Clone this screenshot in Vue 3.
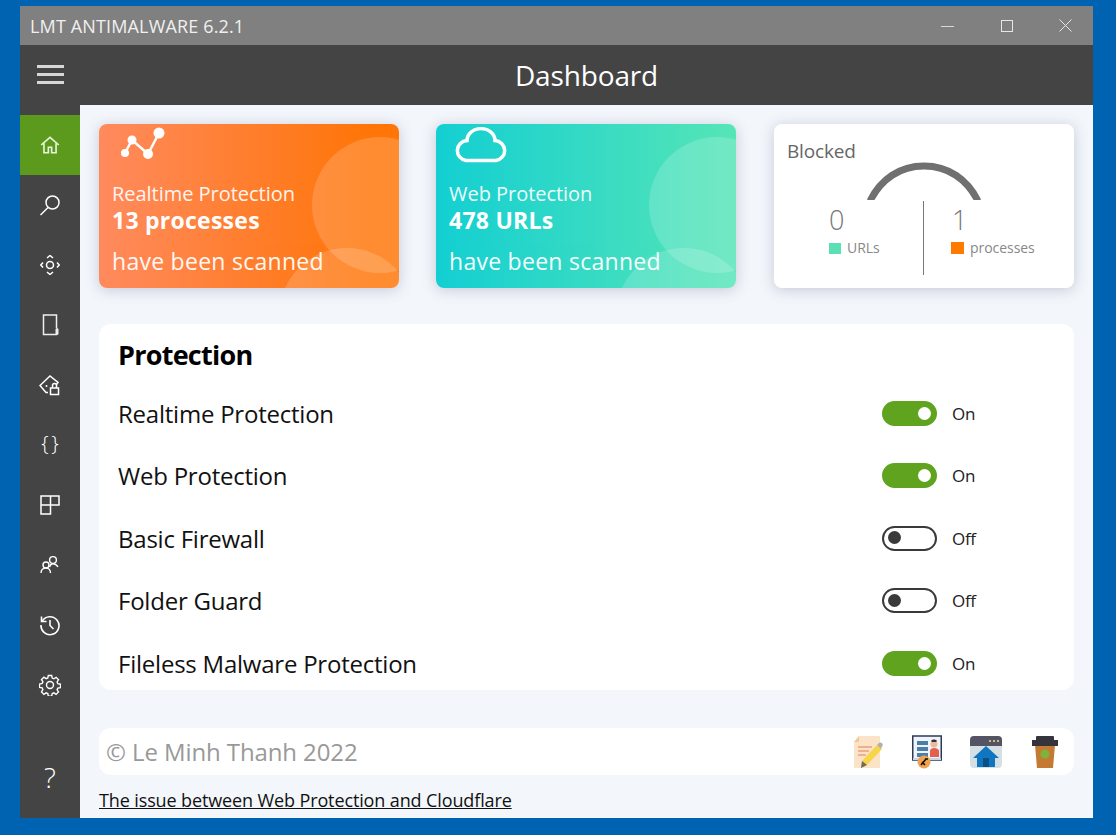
<template>
  <div class="desktop">
    <div class="window">
      <div class="titlebar">
        <span class="title">LMT ANTIMALWARE 6.2.1</span>
        <div class="controls">
          <svg width="13" height="13" viewBox="0 0 13 13"><path d="M0 7.500h13" stroke="#d8d8d8" fill="none"/></svg>
          <svg width="13" height="13" viewBox="0 0 13 13"><rect x="1.500" y="1.500" width="11" height="11" stroke="#e6e6e6" fill="none"/></svg>
          <svg width="13" height="13" viewBox="0 0 13 13"><path d="M.5.5l12 12M12.500.5l-12 12" stroke="#e6e6e6" fill="none"/></svg>
        </div>
      </div>
      <div class="main">
        <aside class="sidebar">
          <div class="burger"><i></i><i></i><i></i></div>
          <div class="nav">
            <div class="nav-item active">
              <svg viewBox="0 0 20 20" width="22" height="22" fill="none" stroke="#e8f5d8" stroke-width="1.500"><path d="M2 10L10 3l8 7M4.500 8.500V17h4v-5h3v5h4V8.500"/></svg>
            </div>
            <div class="nav-item">
              <svg viewBox="0 0 22 22" width="22" height="22" fill="none" stroke="#fff" stroke-width="1.500"><circle cx="13.500" cy="8.500" r="6.500"/><path d="M9 13.500L1.500 21"/></svg>
            </div>
            <div class="nav-item">
              <svg viewBox="0 0 20 20" width="20" height="20" fill="none" stroke="#fff" stroke-width="1.500"><circle cx="10" cy="10" r="3.500"/><path d="M7 3l3-2.500L13 3M7 17l3 2.500 3-2.500M3 7.500L.8 10 3 12.500M17 7.500l2.200 2.500-2.200 2.500"/></svg>
            </div>
            <div class="nav-item">
              <svg viewBox="0 0 18 22" width="18" height="22" fill="none" stroke="#eee" stroke-width="1.500"><path d="M15.500 14V1H2.500v19.500H16"/><path d="M16 15.500v4" stroke-width="3" stroke-linecap="round"/></svg>
            </div>
            <div class="nav-item">
              <svg viewBox="0 0 22 22" width="22" height="22" fill="none" stroke="#fff" stroke-width="1.500"><path d="M9 18.500H7L1 11.500 11 2l8 6.500-1.500 2"/><rect x="11.500" y="14" width="8" height="6.500"/><path d="M13.500 14v-2.500a2 2 0 0 1 4 0V14"/><circle cx="7.500" cy="12" r="1" fill="#fff" stroke="none"/></svg>
            </div>
            <div class="nav-item braces">{ }</div>
            <div class="nav-item">
              <svg viewBox="0 0 20 20" width="20" height="20" fill="none" stroke="#fff" stroke-width="1.500"><path d="M1 1h18v9h-8.500v9H1zM1 10h9.500M10.500 1v9"/></svg>
            </div>
            <div class="nav-item">
              <svg viewBox="0 0 20 20" width="20" height="20" fill="none" stroke="#fff" stroke-width="1.400"><circle cx="13" cy="5" r="3.400"/><path d="M9.500 12c.6-2 2-3.200 3.500-3.200 2.200 0 4 1.600 5 3.200"/><circle cx="6" cy="10" r="3"/><path d="M1 18c0-3 2.200-5 5-5s4.500 2 4.500 5"/></svg>
            </div>
            <div class="nav-item">
              <svg viewBox="0 0 22 22" width="22" height="22" fill="none" stroke="#fff" stroke-width="1.600"><path d="M3.300 7A9 9 0 1 1 2 11"/><path d="M2.500 2.500V7.500H7.500"/><path d="M11 6v5.500l3.500 3.500"/></svg>
            </div>
            <div class="nav-item">
              <svg viewBox="0 0 22 22" width="22" height="22" fill="none" stroke="#fff" stroke-width="1.400"><circle cx="11" cy="11" r="3.500"/><path d="M9.300 1.500h3.400l.5 2.600 1.700.7 2.200-1.500 2.400 2.400L18.100 8l.7 1.700 2.700.5v3.400l-2.700.5-.7 1.700 1.400 2.200-2.400 2.400-2.200-1.500-1.700.7-.5 2.600h-3.400l-.5-2.600-1.700-.7-2.200 1.500-2.400-2.400L3.900 15.600l-.7-1.700-2.700-.5V10l2.700-.5.700-1.700-1.400-2.200 2.400-2.400 2.200 1.500 1.700-.7z"/></svg>
            </div>
          </div>
          <div class="help">?</div>
        </aside>
        <div class="body">
          <header class="topbar">Dashboard</header>
          <div class="content">
            <div class="cards">
              <div class="card orange">
                <div class="blob big"></div><div class="blob small"></div>
                <svg class="card-icon graph" width="48" height="38" viewBox="0 0 48 38" fill="#fff" stroke="none"><path d="M6 28L13 15 29 29 40 8" fill="none" stroke="#fff" stroke-width="2.500"/><circle cx="6" cy="28" r="4"/><circle cx="13" cy="15" r="4.500"/><circle cx="29" cy="29" r="5"/><circle cx="40" cy="8" r="5.500"/></svg>
                <div class="card-l1">Realtime Protection</div>
                <div class="card-l2">13 processes</div>
                <div class="card-l3">have been scanned</div>
              </div>
              <div class="card teal">
                <div class="blob big"></div><div class="blob small"></div>
                <svg class="card-icon cloud" width="54" height="38" viewBox="0 0 54 38" fill="none" stroke="#fff" stroke-width="3.500"><path d="M12 33.500A10 10 0 0 1 13 13.600 14 12 0 0 1 41 13.600 10 10 0 0 1 42 33.500Z"/></svg>
                <div class="card-l1">Web Protection</div>
                <div class="card-l2">478 URLs</div>
                <div class="card-l3">have been scanned</div>
              </div>
              <div class="card white">
                <div class="blocked">Blocked</div>
                <svg class="arc" width="114" height="38" viewBox="0 0 114 38" fill="none"><path d="M3 39C14 17 33 4 57 4s43 13 54 35" stroke="#707070" stroke-width="7"/></svg>
                <div class="stats">
                  <div class="stat left">
                    <div class="num">0</div>
                    <div class="legend"><i class="sq sq-g"></i>URLs</div>
                  </div>
                  <div class="divider"></div>
                  <div class="stat right">
                    <div class="num">1</div>
                    <div class="legend"><i class="sq sq-o"></i>processes</div>
                  </div>
                </div>
              </div>
            </div>
            <section class="protection">
              <h2>Protection</h2>
              <div v-for="row in rows" :key="row.name" class="row">
                <span class="row-name">{{ row.name }}</span>
                <div class="toggle-wrap">
                  <span class="toggle" :class="row.on ? 'on' : 'off'"><i></i></span>
                  <span class="state">{{ row.on ? 'On' : 'Off' }}</span>
                </div>
              </div>
            </section>
            <footer class="foot">
              <span class="copy">© Le Minh Thanh 2022</span>
              <div class="foot-icons">
                <svg width="30" height="34" viewBox="2 0 30 34"><path d="M7 1h21v32H2V7z" fill="#fbe3c8"/><path d="M7 1v6H2z" fill="#f3c79c"/><path d="M6 12h14M6 16h11M6 20h8" stroke="#ee9f7a" stroke-width="1.500"/><path d="M10 26L25 10l5 4-15 16-6 3z" fill="#f6d548"/><path d="M25 10l2-2c1-.6 2-.6 3 .3s1 2 .2 3l-1.400 2.500z" fill="#b0b0b0"/><path d="M10 26l5 4-6 3z" fill="#6b6b6b"/></svg>
                <svg width="30" height="34" viewBox="0 0 30 34"><rect x=".75" y="1" width="28.500" height="24" fill="#eef4fa" stroke="#2b3a55" stroke-width="1.500"/><path d="M1 24h28" stroke="#c9d6e2" stroke-width="2"/><rect x="5" y="6" width="11" height="4" fill="#4c7fa8"/><rect x="5" y="12" width="11" height="4" fill="#4c7fa8"/><rect x="5" y="18" width="11" height="4" fill="#4c7fa8"/><circle cx="22" cy="9" r="3.500" fill="#f0b89a"/><path d="M19 6c1-2 5-2 6 0l-1 1h-4z" fill="#333"/><path d="M18 22v-6c0-2 2-3 4-3s5 1 5 3v6z" fill="#e4604e"/><circle cx="12" cy="27" r="6.500" fill="#f0a24e"/><path d="M9 30l5-6M13 24h3M10 27l3 3" stroke="#111" stroke-width="1.600"/></svg>
                <svg width="32" height="34" viewBox="0 0 32 34"><rect x="0" y="1" width="32" height="32" rx="4" fill="#d5e0e5"/><path d="M0 11V5a4 4 0 0 1 4-4h24a4 4 0 0 1 4 4v6z" fill="#545465"/><path d="M19 6h2M23 6h2M27 6h2" stroke="#c9bd70" stroke-width="2"/><path d="M16 11L3 23h4v9h18v-9h4z" fill="#0f76bf"/><path d="M13 32v-9h6v9z" fill="#0c4f86"/></svg>
                <svg width="26" height="34" viewBox="0 0 26 34"><path d="M3 10h20l-2 23H5z" fill="#c47a33"/><rect x="0" y="5" width="26" height="6" fill="#35333c"/><rect x="4" y="1" width="18" height="5" rx="1" fill="#35333c"/><circle cx="13" cy="19" r="4.500" fill="#7eb23a"/></svg>
              </div>
            </footer>
            <a class="issue" href="#">The issue between Web Protection and Cloudflare</a>
          </div>
        </div>
      </div>
    </div>
  </div>
</template>

<script setup>
const rows = [
  { name: 'Realtime Protection', on: true },
  { name: 'Web Protection', on: true },
  { name: 'Basic Firewall', on: false },
  { name: 'Folder Guard', on: false },
  { name: 'Fileless Malware Protection', on: true }
]
</script>

<style>
html, body { margin: 0; background: #0063b1; overflow: hidden; }
</style>

<style scoped>
.desktop {
  width: 1116px; height: 835px; box-sizing: border-box;
  padding: 6px 23px 17px 20px;
  background: #0063b1;
  font-family: "Open Sans", "Noto Sans", sans-serif;
}
.window { height: 812px; display: flex; flex-direction: column; background: #f3f6fb; }
.titlebar {
  height: 39px; flex: none; background: #808080; color: #f0f0f0;
  display: flex; align-items: center; justify-content: space-between;
  padding: 0 21px 0 10px;
}
.title { font-size: 18px; letter-spacing: .15px; }
.controls { display: flex; gap: 46px; align-items: center; }
.main { flex: 1; display: flex; min-height: 0; }
.sidebar { width: 60px; flex: none; background: #444; display: flex; flex-direction: column; }
.burger { height: 70px; flex: none; box-sizing: border-box; padding: 20px 0 0 17px; }
.burger i { display: block; width: 27px; height: 3px; background: #d6d6d6; margin-bottom: 5px; }
.nav-item { height: 60px; display: flex; align-items: center; justify-content: center; color: #fff; }
.nav-item.active { background: #5c9a1d; }
.braces { font-size: 21px; font-weight: 300; padding-bottom: 5px; box-sizing: border-box; word-spacing: -3px; }
.help { margin-top: 32px; text-align: center; color: #fff; font-size: 28px; font-weight: 300; line-height: 60px; }
.body { flex: 1; min-width: 0; display: flex; flex-direction: column; }
.topbar {
  height: 60px; flex: none; background: #444; color: #fff;
  font-size: 28px; text-align: center; line-height: 60px; letter-spacing: -.15px;
}
.content { flex: 1; padding: 19px 19px 0; box-sizing: border-box; }
.cards { display: flex; }
.card {
  width: 300px; height: 164px; border-radius: 8px; position: relative; overflow: hidden;
  box-sizing: border-box; padding-left: 13px; color: #fff; flex: none;
  box-shadow: 0 2px 14px rgba(90, 100, 130, .3);
}
.orange { background: linear-gradient(90deg, #ff8a5e, #ff7507 90%); margin-right: 37px; }
.teal { background: linear-gradient(90deg, #13cfd2, #56e5b6); margin-right: 38px; }
.white { background: #fff; color: #666; padding: 0; }
.blob { position: absolute; border-radius: 50%; background: rgba(255, 255, 255, .17); }
.big { width: 136px; height: 136px; left: 213px; top: 13px; }
.small { width: 136px; height: 136px; left: 180px; top: 124px; }
.card-icon { position: absolute; }
.graph { left: 20px; top: 1px; }
.cloud { left: 18px; top: 3px; }
.card-l1 { margin-top: 56px; font-size: 20px; line-height: 27px; letter-spacing: -.03px; opacity: .92; }
.card-l2 { font-size: 23px; font-weight: 700; line-height: 29px; letter-spacing: .25px; margin-top: -1px; }
.card-l3 { font-size: 23px; line-height: 32px; margin-top: 10px; letter-spacing: .27px; opacity: .95; }
.blocked { position: absolute; left: 13px; top: 15px; font-size: 19px; letter-spacing: -.15px; color: #666; line-height: 24px; }
.arc { position: absolute; left: 93px; top: 38px; }
.stats { position: absolute; left: 0; right: 0; top: 77px; height: 74px; display: flex; }
.divider { width: 1px; background: #777; }
.stat { position: relative; width: 149px; }
.num { position: absolute; top: 3px; font-size: 27px; font-weight: 300; color: #777; line-height: 32px; }
.left .num { left: 55px; }
.right .num { left: 28px; }
.legend {
  position: absolute; top: 38px; display: flex; align-items: center;
  font-size: 14px; color: #888; letter-spacing: -.05px; line-height: 18px;
}
.left .legend { left: 55px; }
.right .legend { left: 27px; }
.sq { width: 11px; height: 11px; margin-right: 7px; flex: none; }
.sq-g { background: #5be0b5; width: 12px; margin-right: 6px; }
.sq-o { background: #ff7a00; width: 13px; height: 12px; margin-right: 6px; }
.protection {
  margin-top: 36px; height: 366px; box-sizing: border-box; background: #fff; border-radius: 12px;
  padding: 13px 19px 0; overflow: hidden;
}
h2 { margin: 0; font-size: 27px; line-height: 36px; font-weight: 700; color: #000; letter-spacing: -.75px; height: 45px; }
.row { height: 62.5px; display: flex; align-items: center; justify-content: space-between; color: #111; }
.row-name { font-size: 24px; letter-spacing: -.23px; }
.toggle-wrap { display: flex; align-items: center; width: 173px; }
.toggle {
  width: 55px; height: 25px; box-sizing: border-box; border-radius: 13px; position: relative; flex: none;
}
.toggle.on { background: #5fa31f; }
.toggle.off { border: 2.500px solid #3a3a3a; background: #fff; }
.toggle i { position: absolute; border-radius: 50%; width: 13px; height: 13px; top: 6px; }
.toggle.on i { right: 6px; background: #fff; }
.toggle.off i { left: 4px; top: 3.500px; background: #3a3a3a; }
.state { margin-left: 15px; font-size: 17px; color: #222; letter-spacing: -.3px; }
.foot {
  margin-top: 38px; height: 47px; border-radius: 12px; background: #fff; display: flex;
  align-items: center; justify-content: space-between; padding: 0 16px 0 7px; box-sizing: border-box;
}
.copy { font-size: 24px; color: #999; letter-spacing: -.1px; }
.foot-icons { display: flex; gap: 28px; align-items: center; }
.foot-icons svg:last-child { margin-left: 2px; }
.issue { display: block; margin-top: 13px; font-size: 18px; color: #111; letter-spacing: -.12px; line-height: 25px; text-decoration: underline; }
</style>
